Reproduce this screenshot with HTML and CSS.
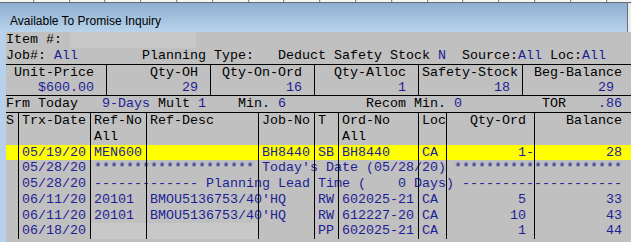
FILE: index.html
```html
<!DOCTYPE html>
<html lang="en">
<head>
    <meta charset="UTF-8">
    <title>Available To Promise Inquiry</title>
    <link rel="stylesheet" href="styles.css">
</head>
<body>
    <div class="window">
        <div class="ruler"></div>
        <div class="titlebar">Available To Promise Inquiry</div>
        <div class="frame">
            <div class="panel">
                <div class="line">Item #: <span class="mask"></span></div>
                <div class="line">Job#: <span class="v">All</span>        Planning Type:   Deduct Safety Stock <span class="v">N</span>  Source:<span class="v">All</span> Loc:<span class="v">All</span></div>

                <div class="stats">
                    <div class="stat"><span>Unit-Price</span><span class="v">$600.00</span></div>
                    <div class="stat"><span>Qty-OH</span><span class="v">29</span></div>
                    <div class="stat"><span>Qty-On-Ord</span><span class="v">16</span></div>
                    <div class="stat"><span>Qty-Alloc</span><span class="v">1</span></div>
                    <div class="stat"><span class="wide">Safety-Stock</span><span class="v">18</span></div>
                    <div class="stat"><span class="wide">Beg-Balance</span><span class="v">29</span></div>
                </div>

                <div class="line">Frm Today   <span class="v">9-Days</span> Mult <span class="v">1</span>    Min. <span class="v">6</span>          Recom Min. <span class="v">0</span>          TOR    <span class="v">.86</span></div>

                <div class="grid">
                    <div class="trow">
                        <span>S</span><span>Trx-Date</span><span>Ref-No</span><span>Ref-Desc</span><span>Job-No</span><span>T</span><span>Ord-No</span><span>Loc</span><span class="num">Qty-Ord </span><span class="num bal">Balance</span>
                    </div>
                    <div class="trow">
                        <span></span><span></span><span>All</span><span></span><span></span><span></span><span>All</span><span></span><span></span><span></span>
                    </div>
                    <div class="trow data hl">
                        <span></span><span>05/19/20</span><span>MEN600</span><span></span><span>BH8440</span><span>SB</span><span>BH8440</span><span>CA</span><span class="num">1-</span><span class="num bal">28</span>
                    </div>
                    <div class="trow data">
                        <span></span><span>05/28/20</span><span>******************** Today's Date (05/28/20) *********************</span><span></span><span></span><span></span><span></span><span></span><span></span><span></span>
                    </div>
                    <div class="trow data">
                        <span></span><span>05/28/20</span><span>------------- Planning Lead Time (    0 Days) --------------------</span><span></span><span></span><span></span><span></span><span></span><span></span><span></span>
                    </div>
                    <div class="trow data">
                        <span></span><span>06/11/20</span><span>20101</span><span>BMOU5136753/40'HQ</span><span></span><span>RW</span><span>602025-21</span><span>CA</span><span class="num">5 </span><span class="num bal">33</span>
                    </div>
                    <div class="trow data">
                        <span></span><span>06/11/20</span><span>20101</span><span>BMOU5136753/40'HQ</span><span></span><span>RW</span><span>612227-20</span><span>CA</span><span class="num">10 </span><span class="num bal">43</span>
                    </div>
                    <div class="trow data">
                        <span></span><span>06/18/20</span><span class="hidden"></span><span class="hidden"></span><span></span><span>PP</span><span>602025-21</span><span>CA</span><span class="num">1 </span><span class="num bal">44</span>
                    </div>
                </div>
            </div>
        </div>
    </div>
</body>
</html>
```

FILE: styles.css
```css
body {
    margin: 0;
    background: #ececec;
}
.window {
    width: 631px;
    height: 242px;
    overflow: hidden;
}
.ruler {
    height: 2px;
    background: repeating-linear-gradient(to right, #f6f6f6 0, #f6f6f6 34.8px, #707070 34.8px, #707070 35.8px);
    background-position: -1.8px 0;
    border-bottom: 1px solid #6a6a6a;
}
.titlebar {
    height: 22px;
    padding: 7px 0 0 10px;
    margin-right: 3px;
    border-right: 1px solid #66707a;
    background: linear-gradient(#8eafd1, #b9d3ea);
    font-family: 'Liberation Sans', Arial, sans-serif;
    font-size: 12px;
    line-height: 22px;
    color: #000;
}
.frame {
    padding-left: 6px;
    background: #b7d1ea;
}
.panel {
    height: 210px;
    overflow: hidden;
    background: #c0c0c0;
    color: #000;
    font-family: 'Liberation Mono', 'Courier New', monospace;
    font-size: 13.333px;
}
.v {
    color: #1e1e96;
}
.line {
    height: 16px;
    line-height: 16px;
    white-space: pre;
}
.mask {
    display: inline-block;
    width: 126px;
    height: 16px;
    vertical-align: top;
    background: #c7c7c7;
}
.stats {
    display: flex;
    border-top: 1px solid #000;
    border-bottom: 1px solid #000;
    line-height: 15px;
}
.stat {
    box-sizing: border-box;
    width: 104px;
    padding-right: 12px;
    border-left: 1px solid #000;
    text-align: right;
    white-space: pre;
}
.stat:first-child {
    width: 100px;
    border-left: none;
}
.stat span {
    display: block;
}
.stat .wide {
    margin-right: -8px;
}
.grid {
    border-top: 1px solid #000;
}
.trow {
    display: grid;
    grid-template-columns: 12px 72px 56px 112px 56px 24px 80px 28px 88px 1fr;
    line-height: 15.75px;
    height: 15.75px;
}
.trow span {
    box-sizing: border-box;
    border-left: 1px solid #000;
    padding-left: 3px;
    white-space: pre;
}
.trow span:first-child {
    border-left: none;
    padding-left: 0;
}
.trow .num {
    padding-left: 0;
    text-align: right;
}
.trow .bal {
    padding-right: 9px;
}
.data {
    color: #1e1e96;
}
.hl {
    background: #ffff00;
}
.trow .hidden {
    background: #c8c8c8;
}
```
